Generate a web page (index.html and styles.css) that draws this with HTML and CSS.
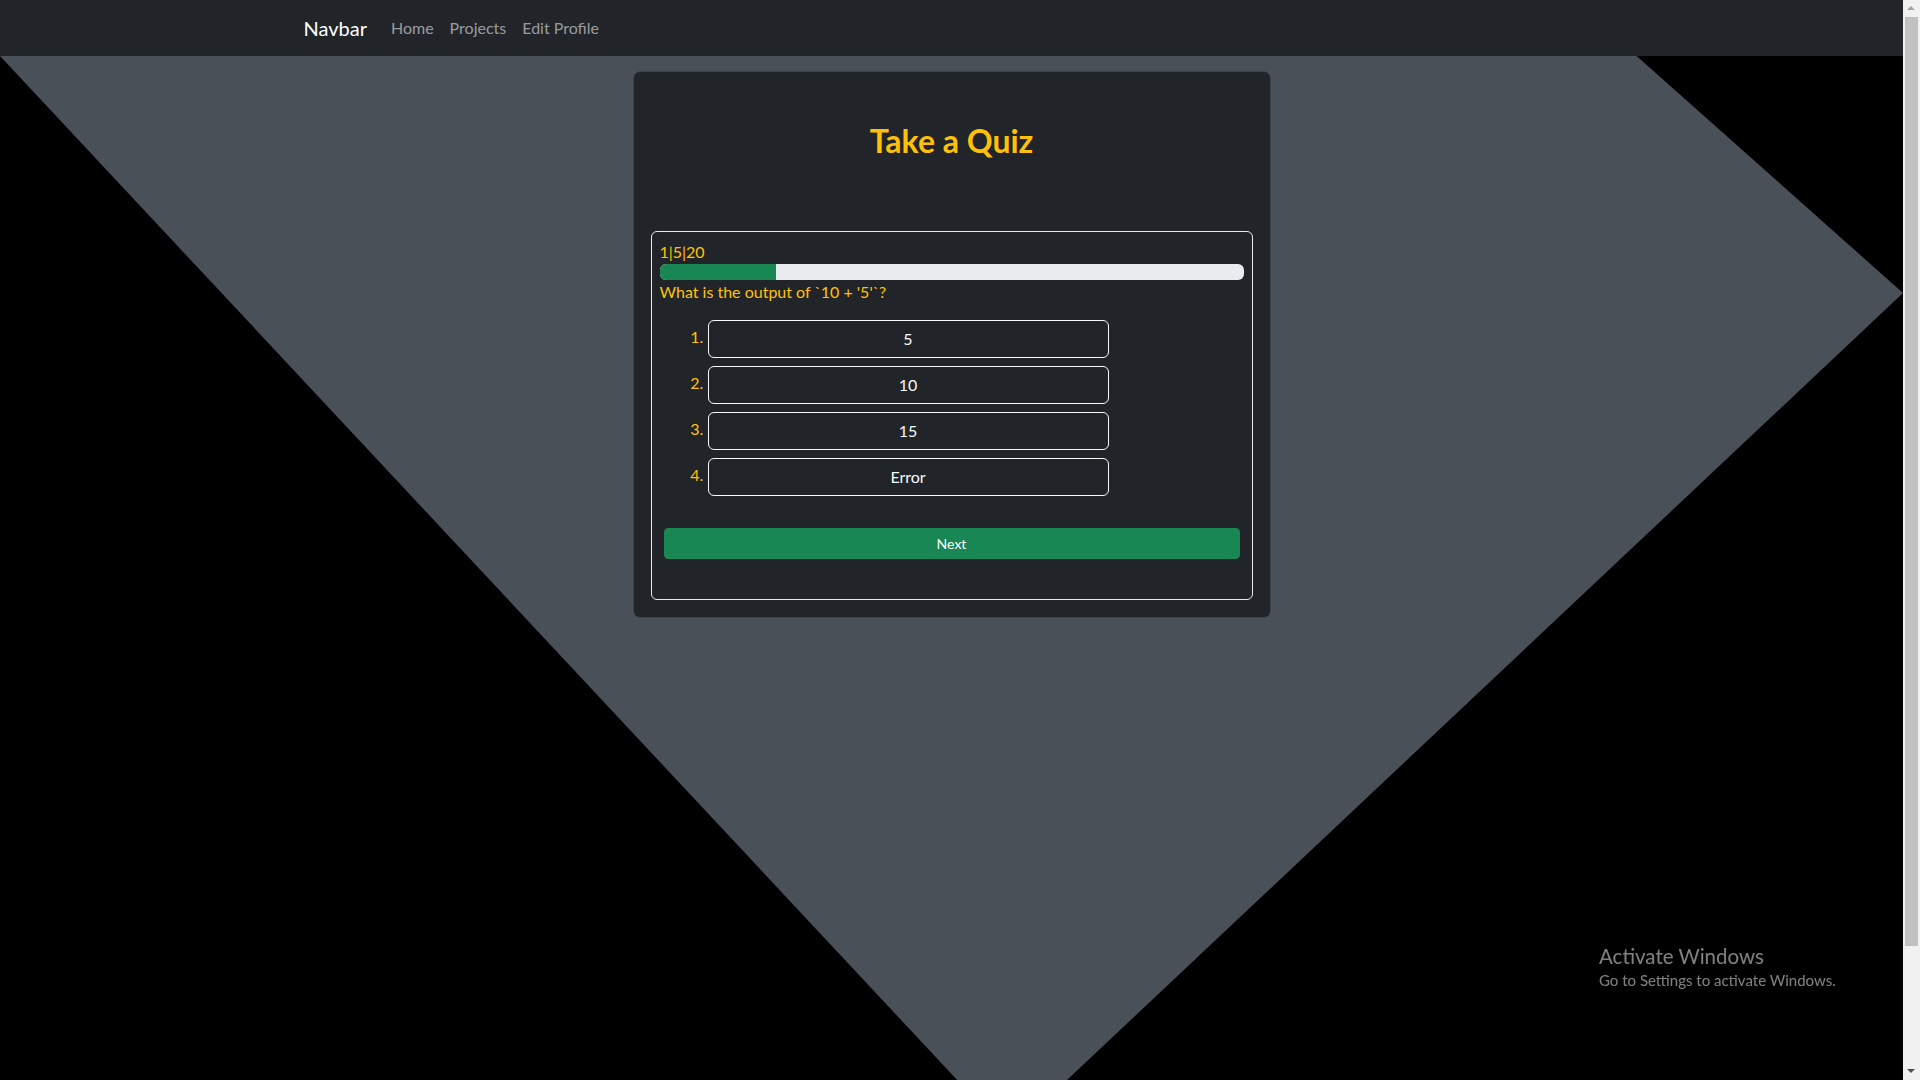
FILE: index.html
```html
<!DOCTYPE html>
<html lang="en">
<head>
<meta charset="utf-8">
<title>Take a Quiz</title>
<link rel="stylesheet" href="styles.css">
</head>
<body>
<nav class="navbar">
  <div class="nav-container">
    <a class="brand" href="#">Navbar</a>
    <ul class="nav-links">
      <li><a href="#">Home</a></li>
      <li><a href="#">Projects</a></li>
      <li><a href="#">Edit Profile</a></li>
    </ul>
  </div>
</nav>
<div class="backdrop"></div>
<main class="page">
  <section class="quiz-card">
    <h1 class="quiz-title">Take a Quiz</h1>
    <div class="quiz-box">
      <div class="quiz-count">1|5|20</div>
      <div class="progress"><div class="progress-fill" style="width: 20%"></div></div>
      <p class="question">What is the output of `10 + '5'`?</p>
      <ol class="options">
        <li><button class="option">5</button></li>
        <li><button class="option">10</button></li>
        <li><button class="option">15</button></li>
        <li><button class="option">Error</button></li>
      </ol>
      <button class="next-btn">Next</button>
    </div>
  </section>
</main>
<div class="watermark">
  <div class="wm-title">Activate Windows</div>
  <div class="wm-sub">Go to Settings to activate Windows.</div>
</div>
<div class="scrollbar" aria-hidden="true">
  <div class="sb-arrow sb-up"></div>
  <div class="sb-track"><div class="sb-thumb"></div></div>
  <div class="sb-arrow sb-down"></div>
</div>
</body>
</html>
```
FILE: styles.css
```css
* { box-sizing: border-box; }
html { margin: 0; padding: 0; background: #000; overflow: hidden; height: 1080px; }
body {
  margin: 0 17px 0 0;
  padding: 0;
  background: #000;
  font-family: "Segoe UI", Lato, "Open Sans", sans-serif;
  font-size: 16px;
  line-height: 1.5;
  color: #fff;
  height: 1080px;
  overflow: hidden;
  position: relative;
}
.navbar {
  height: 56px;
  background: #212529;
  position: relative;
  z-index: 2;
}
.nav-container {
  max-width: 1320px;
  margin: 0 auto;
  padding: 0 12px;
  height: 56px;
  display: flex;
  align-items: center;
}
.brand {
  color: #fff;
  font-size: 20px;
  text-decoration: none;
  margin-right: 16px;
  line-height: 30px;
}
.nav-links {
  list-style: none;
  margin: 0;
  padding: 0;
  display: flex;
}
.nav-links a {
  display: block;
  padding: 8px;
  color: rgba(255, 255, 255, 0.55);
  text-decoration: none;
  font-size: 16px;
  line-height: 24px;
}
.backdrop {
  position: absolute;
  top: 56px;
  left: 0;
  width: 100%;
  height: 1079px;
  background: #495057;
  clip-path: polygon(0 0, 86% 0, 100% 237px, 53% 100%);
  z-index: 0;
}
.page {
  position: relative;
  z-index: 1;
  padding-top: 16px;
}
.quiz-card {
  width: 636px;
  margin: 0 auto;
  background: #212529;
  border-radius: 6px;
  padding: 17px;
  box-shadow: 0 0 0 1px rgba(0, 0, 0, 0.15);
}
.quiz-title {
  margin: 0 0 71px;
  padding-top: 33px;
  text-align: center;
  color: #ffc107;
  font-size: 32px;
  font-weight: 700;
  line-height: 38px;
}
.quiz-box {
  border: 1px solid #e9ecef;
  border-radius: 6px;
  padding: 8px;
}
.quiz-count {
  color: #ffc107;
  line-height: 24px;
}
.progress {
  height: 16px;
  background: #e9ecef;
  border-radius: 6px;
  overflow: hidden;
  display: flex;
}
.progress-fill {
  background: #198754;
  height: 100%;
}
.question {
  margin: 0 0 16px;
  color: #ffc107;
  line-height: 24px;
}
.options {
  margin: 0;
  padding-left: 48px;
  color: #ffc107;
}
.options li + li { margin-top: 8px; }
.option {
  width: 401px;
  height: 38px;
  background: transparent;
  border: 1px solid #f8f9fa;
  border-radius: 6px;
  color: #f8f9fa;
  font-family: inherit;
  font-size: 16px;
  line-height: 24px;
  padding: 6px 12px;
  vertical-align: middle;
}
.next-btn {
  display: block;
  width: 576px;
  height: 31px;
  margin: 32px 4px 32px;
  background: #198754;
  border: 1px solid #198754;
  border-radius: 4px;
  color: #fff;
  font-family: inherit;
  font-size: 14px;
  line-height: 21px;
  padding: 4px 8px;
}
.watermark {
  position: fixed;
  left: 1599px;
  top: 943px;
  z-index: 5;
  color: rgba(255, 255, 255, 0.5);
  pointer-events: none;
}
.wm-title {
  font-size: 20.5px;
  line-height: 27px;
}
.wm-sub {
  font-size: 15px;
  line-height: 20px;
}
.scrollbar {
  position: fixed;
  top: 0;
  right: 0;
  width: 17px;
  height: 100vh;
  background: #f1f1f1;
  display: flex;
  flex-direction: column;
  z-index: 10;
}
.sb-arrow {
  height: 17px;
  flex: none;
  position: relative;
}
.sb-arrow::after {
  content: "";
  position: absolute;
  left: 4px;
  border-left: 4.5px solid transparent;
  border-right: 4.5px solid transparent;
}
.sb-up::after {
  top: 6px;
  border-bottom: 4.5px solid #a3a3a3;
}
.sb-down::after {
  top: 6px;
  border-top: 4.5px solid #505050;
}
.sb-track {
  flex: 1;
  padding: 0 2px;
}
.sb-thumb {
  height: 929px;
  background: #c1c1c1;
}
```
